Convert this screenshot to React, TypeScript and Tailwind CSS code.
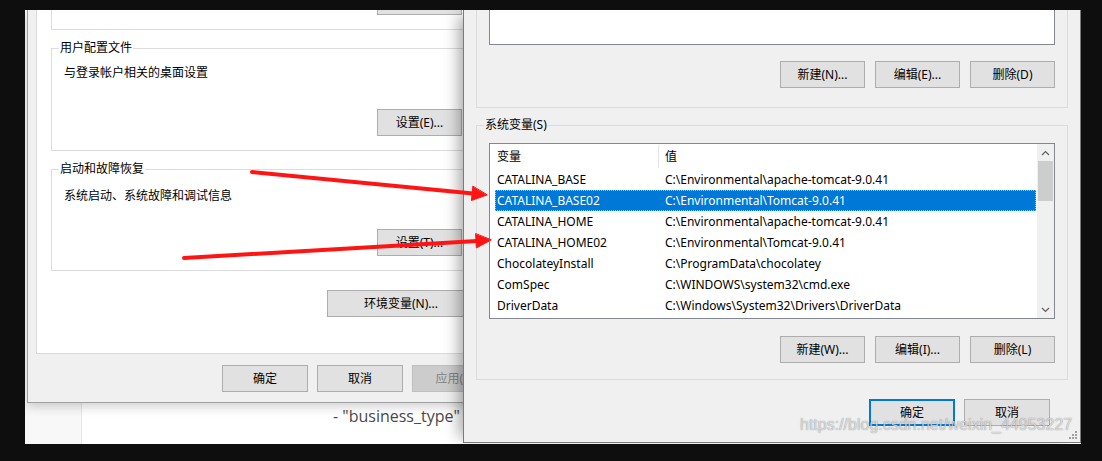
import type { ReactNode } from "react";

const ui = "font-['Noto_Sans','Noto_Sans_CJK_SC',sans-serif] text-[12px] leading-[16px] text-black";

const SYSTEM_VARS: [string, string][] = [
  ["CATALINA_BASE", "C:\\Environmental\\apache-tomcat-9.0.41"],
  ["CATALINA_BASE02", "C:\\Environmental\\Tomcat-9.0.41"],
  ["CATALINA_HOME", "C:\\Environmental\\apache-tomcat-9.0.41"],
  ["CATALINA_HOME02", "C:\\Environmental\\Tomcat-9.0.41"],
  ["ChocolateyInstall", "C:\\ProgramData\\chocolatey"],
  ["ComSpec", "C:\\WINDOWS\\system32\\cmd.exe"],
  ["DriverData", "C:\\Windows\\System32\\Drivers\\DriverData"],
];

function WinButton({
  children,
  className = "",
  disabled,
  primary,
}: {
  children: ReactNode;
  className?: string;
  disabled?: boolean;
  primary?: boolean;
}) {
  const look = disabled
    ? "border border-[#bfbfbf] bg-[#cccccc] text-[#838383]"
    : primary
      ? "border-2 border-[#0078d7] bg-[#e1e1e1]"
      : "border border-[#adadad] bg-[#e1e1e1]";
  return (
    <button
      type="button"
      className={`flex h-[27px] shrink-0 items-center justify-center whitespace-nowrap ${look} ${className}`}
    >
      {children}
    </button>
  );
}

function GroupBox({
  label,
  labelBg,
  className = "",
  children,
}: {
  label: string;
  labelBg: string;
  className?: string;
  children: ReactNode;
}) {
  return (
    <div className={`relative flex flex-col border border-[#dcdcdc] ${className}`}>
      <span className={`absolute -top-[9px] left-[7px] px-px leading-[16px] ${labelBg}`}>{label}</span>
      {children}
    </div>
  );
}

function Chevron({ up }: { up?: boolean }) {
  return (
    <svg width="9" height="6" viewBox="0 0 9 6" className="block">
      <path
        d={up ? "M1 5 L4.5 1.5 L8 5" : "M1 1 L4.5 4.5 L8 1"}
        fill="none"
        stroke="#606060"
        strokeWidth="1.2"
      />
    </svg>
  );
}

function SystemProperties() {
  return (
    <div
      className={`absolute left-[2px] top-0 z-10 flex w-[480px] flex-col border-x border-b border-[#a0a0a0] bg-[#f0f0f0] pb-[10px] pl-[8px] pr-[8px] shadow-[0_4px_10px_rgba(0,0,0,0.18)] ${ui}`}
    >
      {/* tab page */}
      <div className="flex flex-col border-x border-b border-[#d9d9d9] bg-white pb-[36px] pl-[14px] pr-[22px]">
        <div className="flex h-[20px] justify-end border-x border-b border-[#dcdcdc] pr-[12px]">
          <div className="h-[5px] w-[85px] border-x border-b border-[#adadad] bg-[#e1e1e1]" />
        </div>

        <GroupBox label="用户配置文件" labelBg="bg-white" className="mt-[18px] pb-[14px] pl-[12px] pr-[12px] pt-[16px]">
          <p>与登录帐户相关的桌面设置</p>
          <WinButton className="mt-[28px] w-[85px] self-end">设置(E)...</WinButton>
        </GroupBox>

        <GroupBox label="启动和故障恢复" labelBg="bg-white" className="mt-[18px] pb-[14px] pl-[12px] pr-[12px] pt-[18px]">
          <p>系统启动、系统故障和调试信息</p>
          <WinButton className="mt-[25px] w-[85px] self-end">设置(T)...</WinButton>
        </GroupBox>

        <WinButton className="mt-[19px] w-[148px] self-end">环境变量(N)...</WinButton>
      </div>

      <div className="mt-[11px] flex justify-end gap-[9px]">
        <WinButton className="w-[86px]">确定</WinButton>
        <WinButton className="w-[86px]">取消</WinButton>
        <WinButton className="w-[86px]" disabled>
          应用(A)
        </WinButton>
      </div>
    </div>
  );
}

function VariableList() {
  return (
    <div className="flex h-[176px] border border-[#828790] bg-white">
      <div className="flex min-w-0 flex-1 flex-col">
        <div className="flex h-[25px] shrink-0 items-center">
          <div className="flex h-[23px] w-[169px] items-center border-r border-[#e5e5e5] pl-[7px]">变量</div>
          <div className="pl-[6px]">值</div>
        </div>
        {SYSTEM_VARS.map(([name, value], i) => {
          const selected = i === 1;
          return (
            <div
              key={name}
              className={`ml-[5px] mr-px flex h-[21px] shrink-0 items-center whitespace-nowrap ${
                selected
                  ? "bg-[#0078d7] text-white outline-1 -outline-offset-1 outline-dotted outline-[#e9b36a]"
                  : ""
              }`}
            >
              <div className="w-[168px] pl-[2px]">{name}</div>
              <div className="pl-[2px]">{value}</div>
            </div>
          );
        })}
      </div>
      <div className="flex w-[17px] shrink-0 flex-col bg-[#f0f0f0]">
        <div className="flex h-[17px] items-center justify-center">
          <Chevron up />
        </div>
        <div className="mx-px h-[40px] bg-[#cdcdcd]" />
        <div className="flex-1" />
        <div className="flex h-[17px] items-center justify-center">
          <Chevron />
        </div>
      </div>
    </div>
  );
}

function EnvironmentVariables() {
  return (
    <div
      className={`absolute left-[438px] top-0 z-20 flex w-[618px] flex-col border-x border-b border-[#7a7a7a] bg-[#f0f0f0] px-[12px] pb-[16px] shadow-[-10px_0_14px_-6px_rgba(0,0,0,0.35)] ${ui}`}
    >
      <div className="flex flex-col border-x border-b border-[#dcdcdc] px-[12px] pb-[19px]">
        <div className="h-[35px] border-x border-b border-[#828790] bg-white" />
        <div className="mt-[16px] flex justify-end gap-[10px]">
          <WinButton className="w-[85px]">新建(N)...</WinButton>
          <WinButton className="w-[85px]">编辑(E)...</WinButton>
          <WinButton className="w-[85px]">删除(D)</WinButton>
        </div>
      </div>

      <GroupBox label="系统变量(S)" labelBg="bg-[#f0f0f0]" className="mt-[17px] px-[12px] pb-[16px] pt-[17px]">
        <VariableList />
        <div className="mt-[17px] flex justify-end gap-[10px]">
          <WinButton className="w-[85px]">新建(W)...</WinButton>
          <WinButton className="w-[85px]">编辑(I)...</WinButton>
          <WinButton className="w-[85px]">删除(L)</WinButton>
        </div>
      </GroupBox>

      <div className="mr-[18px] mt-[19px] flex justify-end gap-[9px]">
        <WinButton className="w-[86px]" primary>
          确定
        </WinButton>
        <WinButton className="w-[86px]">取消</WinButton>
      </div>

      {/* size grip */}
      <svg width="9" height="9" viewBox="0 0 9 9" className="absolute bottom-[3px] right-[3px]">
        <g fill="#a0a0a0">
          <rect x="7" y="1" width="2" height="2" />
          <rect x="4" y="4" width="2" height="2" />
          <rect x="7" y="4" width="2" height="2" />
          <rect x="1" y="7" width="2" height="2" />
          <rect x="4" y="7" width="2" height="2" />
          <rect x="7" y="7" width="2" height="2" />
        </g>
      </svg>
    </div>
  );
}

export default function App() {
  return (
    <div className="relative h-[461px] w-[1102px] overflow-hidden bg-[#0e0e0e]">
      <div className="relative ml-[25px] mt-[10px] h-[434px] w-[1056px] overflow-hidden">
        {/* page behind the dialogs */}
        <div className="flex h-full">
          <div className="w-[57px] border-r border-[#e6e6e6] bg-[#f8f8f8]" />
          <div className="flex flex-1 items-end bg-white pb-[16px] pl-[251px]">
            <span className="font-['Open_Sans',sans-serif] text-[16px] leading-[24px] text-[#4a4a4a]">
              - "business_type"
            </span>
          </div>
        </div>

        <SystemProperties />
        <EnvironmentVariables />
      </div>

      {/* annotations */}
      <svg width="1102" height="461" className="pointer-events-none absolute left-0 top-0 z-30">
        <g fill="#ff1414" stroke="#ff1414" strokeLinecap="round">
          <line x1="252" y1="172" x2="473" y2="193.5" strokeWidth="4" />
          <polygon points="487,195 471.4,200.5 472.8,186.5" strokeWidth="1" />
          <line x1="184" y1="258" x2="477" y2="241" strokeWidth="4" />
          <polygon points="491,240 476.4,247.9 475.6,233.9" strokeWidth="1" />
        </g>
      </svg>

      <div className="pointer-events-none absolute left-[800px] top-[414px] z-30 font-['Liberation_Sans',sans-serif] text-[16px] leading-[22px] text-white/70 [text-shadow:0_0_1px_rgba(0,0,0,0.55)]">
        https://blog.csdn.net/weixin_44953227
      </div>
    </div>
  );
}
